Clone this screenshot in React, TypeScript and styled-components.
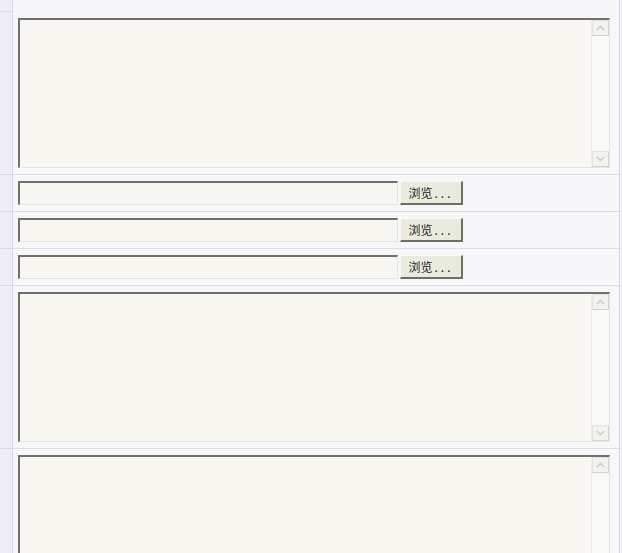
import styled, { createGlobalStyle } from 'styled-components'

const GlobalStyle = createGlobalStyle`
	html, body {
		margin: 0;
		padding: 0;
		background: #eeeef7;
		overflow: hidden;
	}
	body {
		font-family: "Noto Sans CJK SC", "DejaVu Sans", sans-serif;
	}
`

function ScrollTextBox() {
	return (
		<Box>
			<BoxInner />
			<Scroll>
				<Arrow>
					<svg width="9" height="6" viewBox="0 0 9 6">
						<path d="M1 5 L4.5 1.5 L8 5" fill="none" stroke="#cfcfc6" strokeWidth="1.6" />
					</svg>
				</Arrow>
				<Track />
				<Arrow>
					<svg width="9" height="6" viewBox="0 0 9 6">
						<path d="M1 1 L4.5 4.5 L8 1" fill="none" stroke="#cfcfc6" strokeWidth="1.6" />
					</svg>
				</Arrow>
			</Scroll>
		</Box>
	)
}

function FileRow() {
	return (
		<FileLine>
			<Input />
			<Browse>
				浏览<Dots>...</Dots>
			</Browse>
		</FileLine>
	)
}

function App() {
	return (
		<Table>
			<GlobalStyle />
			<Row $h={11}>
				<Side />
				<Cell />
			</Row>
			<Row>
				<Side />
				<Cell>
					<ScrollTextBox />
				</Cell>
			</Row>
			{[0, 1, 2].map((i) => (
				<Row key={i}>
					<Side />
					<Cell>
						<FileRow />
					</Cell>
				</Row>
			))}
			<Row>
				<Side />
				<Cell>
					<ScrollTextBox />
				</Cell>
			</Row>
			<Row>
				<Side />
				<Cell>
					<ScrollTextBox />
				</Cell>
			</Row>
		</Table>
	)
}
export default App

const Table = styled.div`
	width: 620px;
	display: flex;
	flex-direction: column;
`
const Row = styled.div<{ $h?: number }>`
	display: flex;
	border-bottom: 1px solid #dcdce4;
	${({ $h }) => ($h ? `height: ${$h}px;` : '')}
`
const Side = styled.div`
	width: 12px;
	flex-shrink: 0;
	background: #eeeef7;
	border-right: 1px solid #d9d9e2;
`
const Cell = styled.div`
	flex: 1;
	background: #f7f7f9;
	padding: 6px 9px 6px 5px;
	border-right: 1px solid #dcdce4;
`
const Box = styled.div`
	width: 592px;
	height: 150px;
	box-sizing: border-box;
	display: flex;
	background: #f8f7f1;
	border-top: 2px solid #727068;
	border-left: 2px solid #727068;
	border-bottom: 1px solid #e6e5de;
	border-right: 1px solid #e6e5de;
`
const BoxInner = styled.div`
	flex: 1;
`
const Scroll = styled.div`
	width: 17px;
	display: flex;
	flex-direction: column;
	background: #f6f6f3;
	border-left: 1px solid #ececea;
`
const Arrow = styled.div`
	height: 16px;
	box-sizing: border-box;
	display: flex;
	align-items: center;
	justify-content: center;
	background: #f2f2ee;
	border: 1px solid #e3e3de;
	border-right-color: #d4d4cf;
	border-bottom-color: #d4d4cf;
`
const Track = styled.div`
	flex: 1;
	background: #f9f9f7;
`
const FileLine = styled.div`
	display: flex;
	align-items: flex-start;
	gap: 2px;
`
const Input = styled.div`
	width: 380px;
	height: 24px;
	box-sizing: border-box;
	background: #f8f7f1;
	border-top: 2px solid #727068;
	border-left: 2px solid #727068;
	border-bottom: 1px solid #e6e5de;
	border-right: 1px solid #e6e5de;
`
const Browse = styled.div`
	width: 63px;
	height: 24px;
	box-sizing: border-box;
	display: flex;
	align-items: center;
	justify-content: center;
	font-size: 12px;
	color: #1a1a1a;
	background: #ebeade;
	border-top: 1px solid #fbfbf6;
	border-left: 1px solid #fbfbf6;
	border-right: 2px solid #6f6d64;
	border-bottom: 2px solid #6f6d64;
	padding-bottom: 1px;
`
const Dots = styled.span`
	letter-spacing: 3px;
	margin-left: 2px;
`
